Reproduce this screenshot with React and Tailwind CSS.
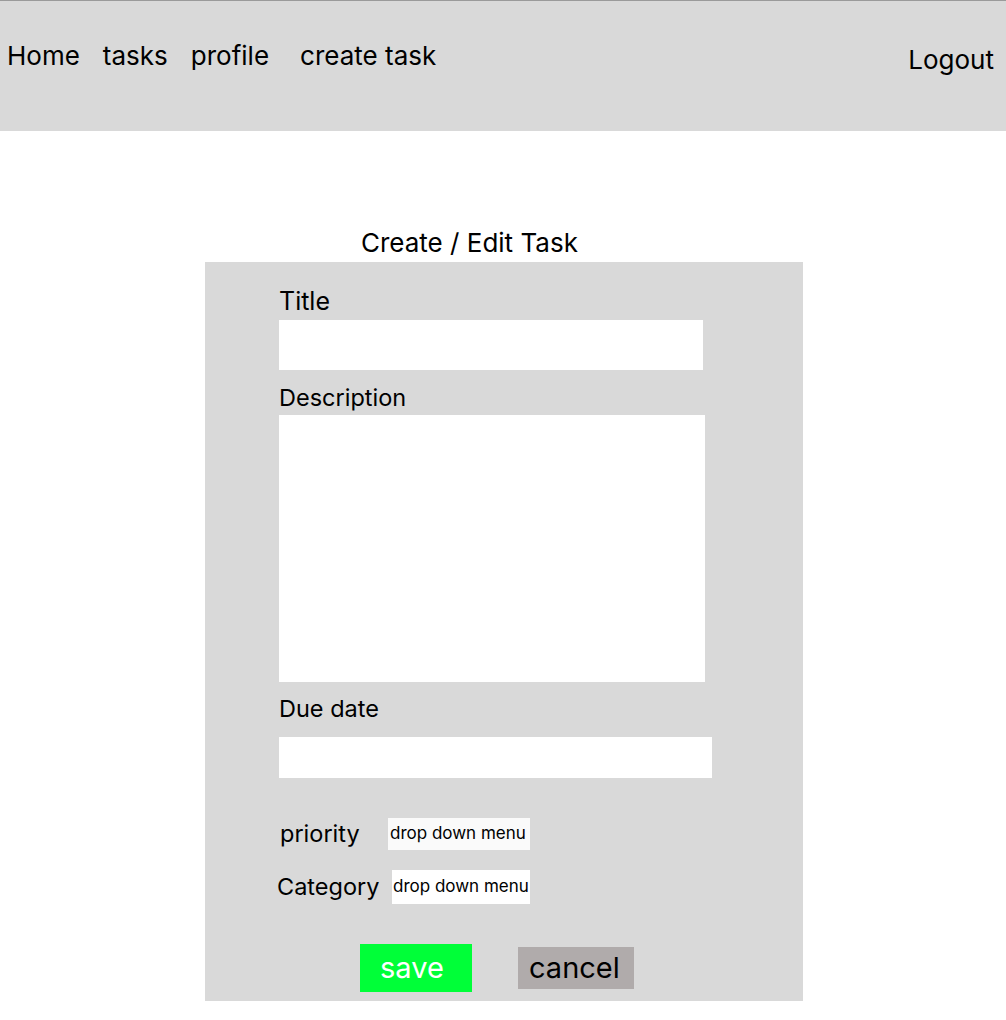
const navLinks = [
	{ label: "Home", cls: "" },
	{ label: "tasks", cls: "ml-[23px]" },
	{ label: "profile", cls: "ml-[23px]" },
	{ label: "create task", cls: "ml-[31px]" },
];

export default function App() {
	return (
		<div className="min-h-[1020px] bg-white font-['Inter',sans-serif] text-black">
			{/* Top bar */}
			<header className="flex h-[131px] justify-between border-t border-[#9a9a9a] bg-[#d9d9d9]">
				<nav className="flex items-start pl-[7px] pt-[39px] text-[26px] leading-[31px]">
					{navLinks.map((link) => (
						<a key={link.label} href="#" className={link.cls}>
							{link.label}
						</a>
					))}
				</nav>
				<a href="#" className="mr-[12px] mt-[43px] text-[26px] leading-[31px]">
					Logout
				</a>
			</header>

			<main className="ml-[205px] w-[598px]">
				<h1 className="ml-[156px] mt-[97px] text-[26px] leading-[30px]">Create / Edit Task</h1>

				{/* Form panel */}
				<form className="mt-[4px] flex h-[739px] flex-col bg-[#d9d9d9] pl-[74px]">
					<label className="pt-[25px] text-[25px] leading-[28px]">Title</label>
					<input type="text" className="mt-[5px] h-[50px] w-[424px] bg-white outline-none" />

					<label className="mt-[15px] text-[23.5px] leading-[26px]">Description</label>
					<textarea className="mt-[4px] h-[267px] w-[426px] resize-none bg-white outline-none" />

					<label className="mt-[14px] text-[23.5px] leading-[26px]">Due date</label>
					<input type="text" className="mt-[15px] h-[41px] w-[433px] bg-white outline-none" />

					<div className="ml-[1px] mt-[40px] flex items-center">
						<span className="w-[108px] text-[23.5px] leading-[26px]">priority</span>
						<div className="flex h-[32px] w-[142px] items-center bg-[#fafafa] pl-[2px] text-[17px]">
							drop down menu
						</div>
					</div>

					<div className="ml-[-2px] mt-[20px] flex items-center">
						<span className="w-[115px] text-[23.5px] leading-[26px]">Category</span>
						<div className="flex h-[34px] w-[138px] items-center bg-white pl-[1px] text-[17px]">
							drop down menu
						</div>
					</div>

					<div className="ml-[81px] mt-[40px] flex items-center gap-[46px]">
						<button type="button" className="flex h-[48px] w-[112px] items-center bg-[#00ff38] pl-[20px] text-[29px] text-white">
							save
						</button>
						<button type="button" className="flex h-[42px] w-[116px] items-center bg-[#b0abab] pl-[11px] text-[29px]">
							cancel
						</button>
					</div>
				</form>
			</main>
		</div>
	);
}
